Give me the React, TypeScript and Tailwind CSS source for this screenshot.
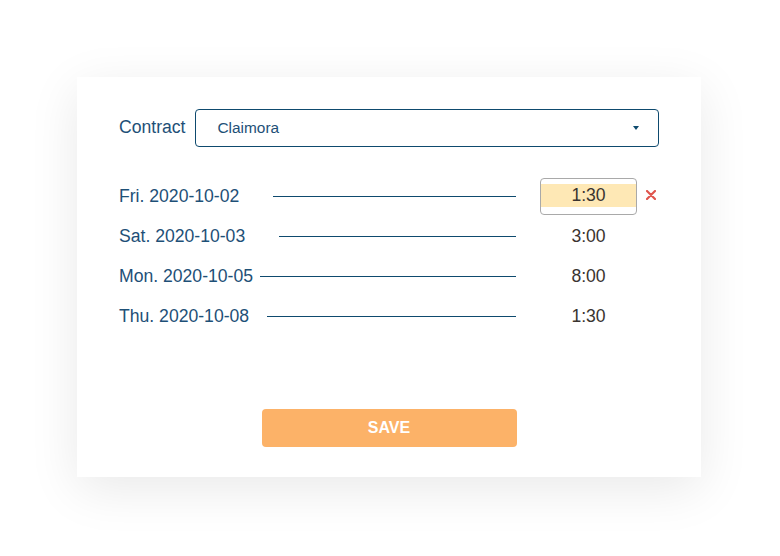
import { useState } from 'react'

interface Entry {
  day: string
  time: string
  // where the leader line starts after the label
  gap: string
}

const entries: Entry[] = [
  { day: 'Fri. 2020-10-02', time: '1:30', gap: 'ml-[34px]' },
  { day: 'Sat. 2020-10-03', time: '3:00', gap: 'ml-[34px]' },
  { day: 'Mon. 2020-10-05', time: '8:00', gap: 'ml-[7px]' },
  { day: 'Thu. 2020-10-08', time: '1:30', gap: 'ml-[18px]' },
]

function Caret() {
  return (
    <svg width="6" height="4" viewBox="0 0 6 4">
      <path d="M0 0h6L3 4z" fill="#0e4a6e" />
    </svg>
  )
}

function ClearIcon() {
  return (
    <svg width="10" height="10" viewBox="0 0 10 10">
      <path d="M1 1l8 8M9 1L1 9" stroke="#e0554d" strokeWidth="2.2" strokeLinecap="round" />
    </svg>
  )
}

function Row({ entry, active }: { entry: Entry; active: boolean }) {
  return (
    <div className="flex h-10 items-center">
      <span className="text-[17.6px] text-[#1e5077]">{entry.day}</span>
      <div className={`h-px flex-1 bg-[#0e4a6e] ${entry.gap}`} />
      <div className="ml-6 flex w-[97px] justify-center">
        {active ? (
          <div className="h-[37px] w-full rounded-[4px] border border-[#a9a9a9] bg-white py-[5px]">
            <div className="flex h-[23px] items-center justify-center bg-[#fee8b5] text-[17.6px] text-[#3a3430]">
              {entry.time}
            </div>
          </div>
        ) : (
          <span className="text-[17.6px] text-[#3a3430]">{entry.time}</span>
        )}
      </div>
      <div className="flex w-[22px] justify-start pb-[3px] pl-[9px]">
        {active && <ClearIcon />}
      </div>
    </div>
  )
}

export default function App() {
  const [contract] = useState('Claimora')

  return (
    <div className="flex h-[556px] w-full items-center justify-center bg-white pr-[2px] pb-[3px] font-['Liberation_Sans',Arial,sans-serif]">
      <div className="flex h-[400px] w-[624px] flex-col bg-white px-[42px] pt-8 pb-[30px] shadow-[0_12px_48px_rgba(0,0,0,0.09)]">
        {/* Contract picker */}
        <div className="flex items-center">
          <span className="mr-[9px] text-[17.6px] text-[#1e5077]">Contract</span>
          <div className="flex h-[38px] flex-1 items-center justify-between rounded-[4px] border border-[#0e4a6e] pr-[19px] pl-[22px]">
            <span className="text-[15.4px] text-[#1e5077]">{contract}</span>
            <Caret />
          </div>
        </div>

        {/* Logged hours per day */}
        <div className="mt-[30px] flex flex-col">
          {entries.map((entry, i) => (
            <Row key={entry.day} entry={entry} active={i === 0} />
          ))}
        </div>

        <div className="mt-auto flex justify-center">
          <button className="h-[38px] w-[255px] rounded-[4px] bg-[#fcb268] text-[16px] font-bold text-white">
            SAVE
          </button>
        </div>
      </div>
    </div>
  )
}
